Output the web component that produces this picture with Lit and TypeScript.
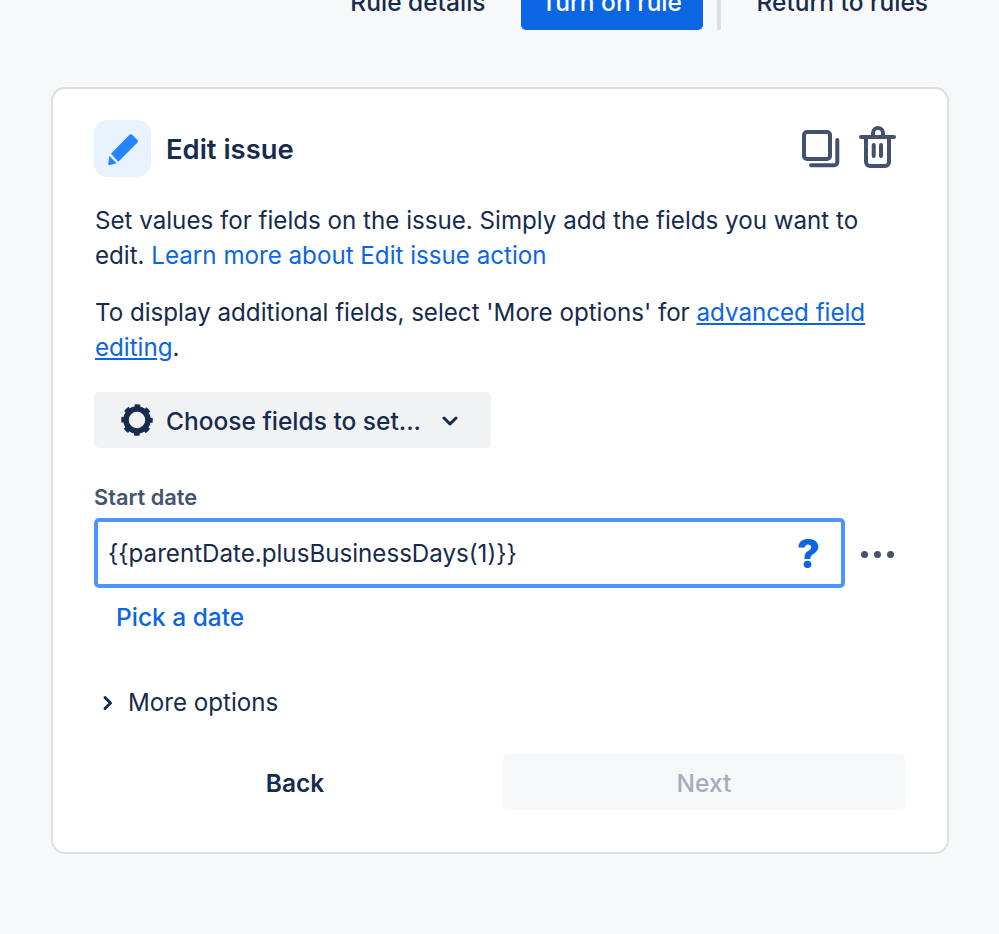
import { LitElement, css, html, type TemplateResult } from 'lit';
import { customElement } from 'lit/decorators.js';

@customElement('app-root')
export class AppRoot extends LitElement {
  override render(): TemplateResult {
    return html`
      <div class="topbar">
        <span class="top-link details">Rule details</span>
        <span class="turn-on">Turn on rule</span>
        <span class="sep"></span>
        <span class="top-link">Return to rules</span>
      </div>

      <div class="card">
        <div class="head">
          <div class="badge">
            <svg width="36" height="36" viewBox="0 0 36 36">
              <path fill="#2684ff" d="M24.300 4a2.200 2.200 0 0 1 3.100 0l4.900 4.700a2.200 2.200 0 0 1 0 3.100L13.300 30.700 6 22.700z"/>
              <path fill="#2684ff" d="M4.300 25l7.400 7.300-6.700 1.800a1.400 1.400 0 0 1-1.700-1.700z"/>
            </svg>
          </div>
          <div class="title">Edit issue</div>
          <div class="tools">
            <svg width="42" height="44" viewBox="0 0 42 44" fill="none" stroke="#42526e" stroke-width="4" stroke-linecap="round" stroke-linejoin="round">
              <rect x="4" y="5" width="26" height="27" rx="3"/>
              <path d="M37.300 13V35.300a3 3 0 0 1-3 3H11"/>
            </svg>
            <svg width="42" height="48" viewBox="0 0 42 48" fill="none" stroke="#42526e" stroke-width="4" stroke-linecap="round" stroke-linejoin="round">
              <path d="M4 12h33"/>
              <path d="M16 11V8a5 5 0 0 1 10 0v3"/>
              <path d="M9 12v25a4 4 0 0 0 4 4h15a4 4 0 0 0 4-4V12"/>
              <path d="M16.700 20v11M24 20v11"/>
            </svg>
          </div>
        </div>

        <p class="para first">Set values for fields on the issue. Simply add the fields you want to edit. <span class="link">Learn more about Edit issue action</span></p>
        <p class="para second">To display additional fields, select 'More options' for <span class="link under">advanced field editing</span>.</p>

        <div class="choose">
          <svg class="gear" width="34" height="34" viewBox="0 0 34 34" fill="none" stroke="#172b4d">
            <circle cx="17" cy="17" r="11" stroke-width="5.500"/>
            <circle cx="17" cy="17" r="14" stroke-width="3.500" stroke-dasharray="5.500 5.500" stroke-dashoffset="2.750"/>
          </svg>
          <span>Choose fields to set...</span>
          <svg class="caret" width="16" height="12" viewBox="0 0 16 12" fill="none" stroke="#172b4d" stroke-width="3" stroke-linecap="round" stroke-linejoin="round">
            <path d="M2 3l6 6 6-6"/>
          </svg>
        </div>

        <div class="label">Start date</div>
        <div class="field-row">
          <div class="input">
            <span class="value">{{parentDate.plusBusinessDays(1)}}</span>
            <span class="help">?</span>
          </div>
          <div class="dots"><i></i><i></i><i></i></div>
        </div>

        <div class="pick">Pick a date</div>

        <div class="more">
          <svg width="12" height="16" viewBox="0 0 12 16" fill="none" stroke="#172b4d" stroke-width="3" stroke-linecap="round" stroke-linejoin="round">
            <path d="M3 2.500l5.500 5.500-5.500 5.500"/>
          </svg>
          <span>More options</span>
        </div>

        <div class="actions">
          <div class="btn back">Back</div>
          <div class="btn next">Next</div>
        </div>
      </div>
    `;
  }

  static override styles = css`
    :host {
      display: block;
      min-height: 934px;
      box-sizing: border-box;
      background: #f7f8f9;
      font-family: Inter, 'Liberation Sans', sans-serif;
      font-size: 24.15px;
      line-height: 35px;
      color: #172b4d;
      overflow: hidden;
    }
    .topbar {
      height: 30px;
      display: flex;
      align-items: flex-end;
      padding-right: 71px;
      justify-content: flex-end;
      font-size: 24.5px;
    }
    .top-link {
      font-weight: 500;
      height: 56px;
      line-height: 56px;
      flex: none;
    }
    .details { margin-right: 35px; }
    .turn-on {
      flex: none;
      width: 182px;
      height: 56px;
      line-height: 56px;
      text-align: center;
      background: #0c66e4;
      color: #fff;
      font-weight: 500;
      border-radius: 5px;
    }
    .sep {
      flex: none;
      width: 4px;
      height: 56px;
      background: #dcdfe4;
      margin: 0 36px 0 14px;
    }
    .card {
      box-sizing: border-box;
      width: 898px;
      height: 767px;
      margin: 57px 0 0 51px;
      padding: 31px 42px 0 41px;
      background: #fff;
      border: 2px solid #dcdfe4;
      border-radius: 14px;
    }
    .head {
      display: flex;
      align-items: center;
      height: 57px;
    }
    .badge {
      width: 57px;
      height: 57px;
      border-radius: 14px;
      background: #e9f2ff;
      display: flex;
      align-items: center;
      justify-content: center;
      flex: none;
    }
    .title {
      margin-left: 15px;
      padding-top: 2px;
      font-size: 27.4px;
      font-weight: 600;
      flex: 1;
    }
    .tools {
      display: flex;
      align-items: center;
      gap: 15px;
      padding-right: 6px;
    }
    .para { margin: 0 0 0 1px; }
    .para.first { margin-top: 26px; }
    .para.second { margin-top: 22px; }
    .link { color: #0c66e4; }
    .under { text-decoration: underline; }
    .choose {
      margin-top: 27px;
      width: 397px;
      height: 56px;
      border-radius: 5px;
      background: #f1f2f4;
      display: flex;
      align-items: center;
      font-size: 24.5px;
      font-weight: 500;
      box-sizing: border-box;
      padding: 2px 0 0 26px;
    }
    .gear { flex: none; margin: -3px 12px 0 0; }
    .caret { flex: none; margin-left: 21px; }
    .label {
      margin-top: 35px;
      font-size: 21.8px;
      line-height: 28px;
      font-weight: 600;
      color: #44546f;
    }
    .field-row {
      margin-top: 7px;
      display: flex;
      align-items: center;
    }
    .input {
      box-sizing: border-box;
      width: 751px;
      height: 70px;
      border: 4px solid #4c94ff;
      border-radius: 5px;
      display: flex;
      align-items: center;
      justify-content: space-between;
      padding: 0 21px 0 10px;
      flex: none;
    }
    .value { padding-top: 1px; }
    .help {
      color: #0c66e4;
      font-size: 40px;
      font-weight: 800;
    }
    .dots {
      display: flex;
      gap: 6px;
      margin: 3px 0 0 16px;
    }
    .dots i {
      width: 7px;
      height: 7px;
      border-radius: 50%;
      background: #44546f;
    }
    .pick {
      margin: 12px 0 0 22px;
      font-size: 24.5px;
      color: #0c66e4;
      font-weight: 500;
    }
    .more {
      margin-top: 50px;
      display: flex;
      align-items: center;
      gap: 14px;
      padding-left: 8px;
    }
    .actions {
      margin-top: 34px;
      display: flex;
      gap: 7px;
      font-size: 24.5px;
    }
    .btn {
      flex: 1;
      height: 56px;
      line-height: 58px;
      text-align: center;
      font-weight: 600;
      border-radius: 5px;
    }
    .next {
      background: #f7f8f9;
      color: #a5adba;
      font-weight: 500;
    }
  `;
}

declare global {
  interface HTMLElementTagNameMap {
    'app-root': AppRoot;
  }
}
